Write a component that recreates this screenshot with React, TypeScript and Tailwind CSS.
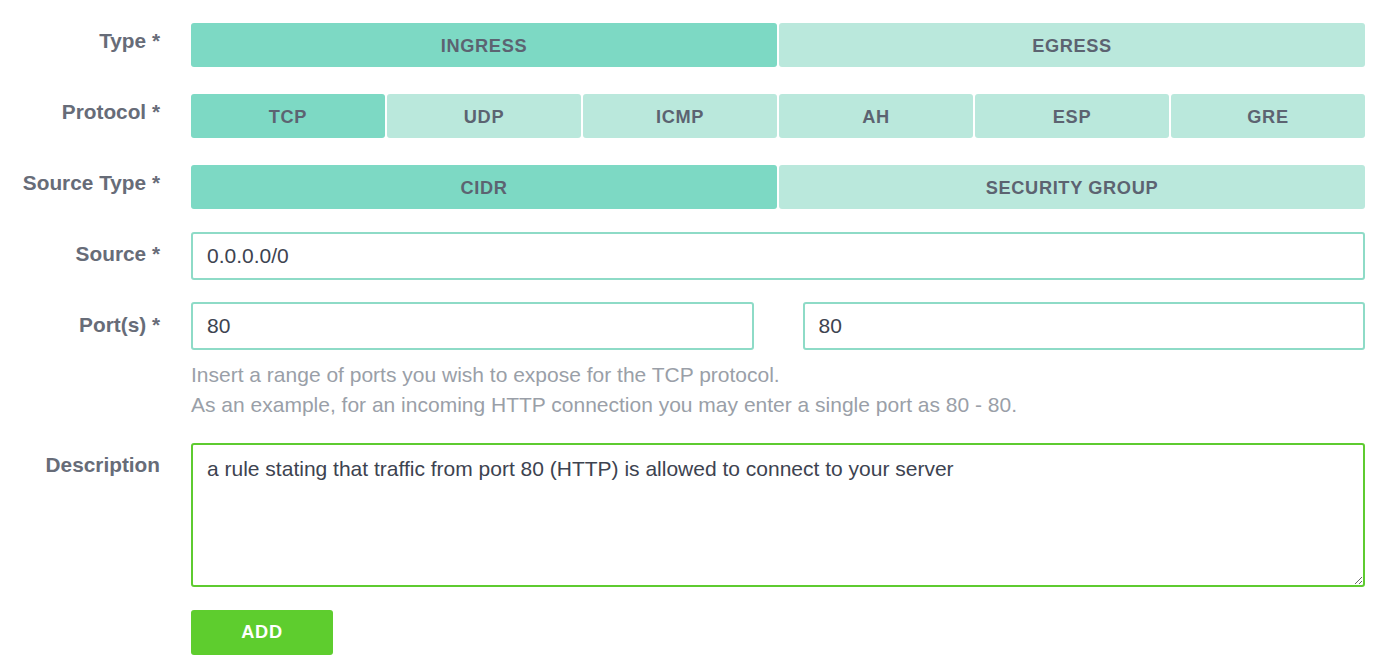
import React from "react";

const font = { fontFamily: '"Liberation Sans", Arial, sans-serif' };

function Seg({ items, active }: { items: string[]; active: number }) {
  return (
    <div className="flex gap-[2px] h-[44px]">
      {items.map((t, i) => (
        <button
          key={t}
          className={
            "flex-1 rounded-[3px] flex items-center justify-center pt-[3px] text-[18.2px] font-bold tracking-[0.65px] text-[#5c6371] " +
            (i === active ? "bg-[#7dd9c4]" : "bg-[#bae8dc]")
          }
        >
          {t}
        </button>
      ))}
    </div>
  );
}

function Label({ text, pt }: { text: string; pt: string }) {
  return (
    <div className={"text-right text-[20.8px] leading-[26px] font-bold text-[#676c78] " + pt}>{text}</div>
  );
}

export default function App() {
  return (
    <div style={font} className="bg-white w-[1378px] h-[668px] pt-[23px] pr-[13px]">
      <div className="grid grid-cols-[160px_1fr] gap-x-[31px]">
        <Label text="Type *" pt="pt-[5px]" />
        <Seg items={["INGRESS", "EGRESS"]} active={0} />

        <div className="col-span-2 h-[27px]" />
        <Label text="Protocol *" pt="pt-[5px]" />
        <Seg items={["TCP", "UDP", "ICMP", "AH", "ESP", "GRE"]} active={0} />

        <div className="col-span-2 h-[27px]" />
        <Label text="Source Type *" pt="pt-[5px]" />
        <Seg items={["CIDR", "SECURITY GROUP"]} active={0} />

        <div className="col-span-2 h-[23px]" />
        <Label text="Source *" pt="pt-[9px]" />
        <input
          defaultValue="0.0.0.0/0"
          className="h-[48px] border-2 border-[#8edbc7] rounded-[3px] px-[14px] text-[21px] text-[#3d4350] outline-none"
        />

        <div className="col-span-2 h-[22px]" />
        <Label text="Port(s) *" pt="pt-[10px]" />
        <div>
          <div className="grid grid-cols-2 gap-x-[49px]">
            <input
              defaultValue="80"
              className="h-[48px] border-2 border-[#8edbc7] rounded-[3px] px-[14px] text-[21px] text-[#3d4350] outline-none min-w-0"
            />
            <input
              defaultValue="80"
              className="h-[48px] border-2 border-[#8edbc7] rounded-[3px] px-[14px] text-[21px] text-[#3d4350] outline-none min-w-0"
            />
          </div>
          <div className="mt-[10px] text-[21px] leading-[30px] text-[#9a9fa8]">
            <p>Insert a range of ports you wish to expose for the TCP protocol.</p>
            <p>As an example, for an incoming HTTP connection you may enter a single port as 80 - 80.</p>
          </div>
        </div>

        <div className="col-span-2 h-[23px]" />
        <Label text="Description" pt="pt-[9px]" />
        <textarea
          defaultValue="a rule stating that traffic from port 80 (HTTP) is allowed to connect to your server"
          className="block h-[144px] border-2 border-[#5ecb30] rounded-[3px] px-[14px] pt-[10px] text-[21px] leading-[28px] text-[#3d4350] outline-none"
        />

        <div className="col-span-2 h-[23px]" />
        <div />
        <div>
          <button className="w-[142px] h-[45px] rounded-[3px] bg-[#5ecd2e] text-white font-bold text-[18.2px] tracking-[0.65px]">
            ADD
          </button>
        </div>
      </div>
    </div>
  );
}
